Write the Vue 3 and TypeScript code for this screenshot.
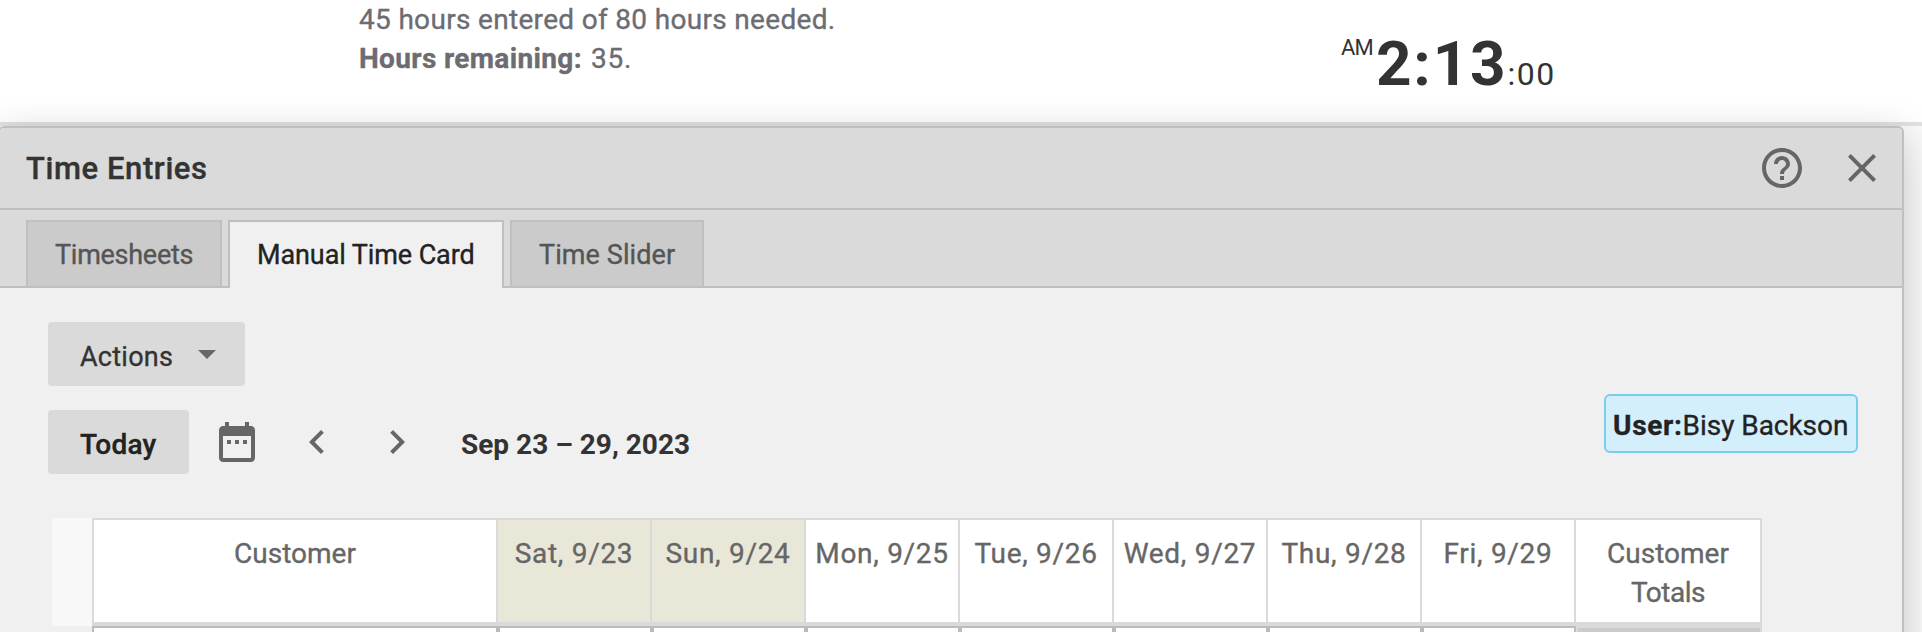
<script setup lang="ts">
interface Tab {
  id: string
  label: string
  active: boolean
}

interface DayColumn {
  label: string
  weekend: boolean
}

const tabs: Tab[] = [
  { id: 'timesheets', label: 'Timesheets', active: false },
  { id: 'manual', label: 'Manual Time Card', active: true },
  { id: 'slider', label: 'Time Slider', active: false },
]

const days: DayColumn[] = [
  { label: 'Sat, 9/23', weekend: true },
  { label: 'Sun, 9/24', weekend: true },
  { label: 'Mon, 9/25', weekend: false },
  { label: 'Tue, 9/26', weekend: false },
  { label: 'Wed, 9/27', weekend: false },
  { label: 'Thu, 9/28', weekend: false },
  { label: 'Fri, 9/29', weekend: false },
]
</script>

<template>
  <div class="page">
    <header class="summary">
      <div class="hours">
        <div class="entered">45 hours entered of 80 hours needed.</div>
        <div><b class="remaining">Hours remaining:</b><span class="left">35.</span></div>
      </div>
      <div class="clock">
        <span class="meridiem">AM</span>
        <span class="time">2:13</span>
        <span class="seconds">:00</span>
      </div>
    </header>

    <section class="dialog">
      <div class="title-bar">
        <h1>Time Entries</h1>
        <div class="tools">
          <svg class="icon" viewBox="0 0 24 24">
            <path d="M11 18h2v-2h-2v2zm1-16C6.48 2 2 6.48 2 12s4.48 10 10 10 10-4.48 10-10S17.52 2 12 2zm0 18c-4.41 0-8-3.59-8-8s3.59-8 8-8 8 3.59 8 8-3.59 8-8 8zm0-14c-2.21 0-4 1.790-4 4h2c0-1.100.9-2 2-2s2 .9 2 2c0 2-3 1.750-3 5h2c0-2.250 3-2.500 3-5 0-2.210-1.790-4-4-4z" />
          </svg>
          <svg class="icon" viewBox="0 0 24 24">
            <path d="M19 6.410L17.590 5 12 10.590 6.410 5 5 6.410 10.590 12 5 17.590 6.410 19 12 13.410 17.590 19 19 17.590 13.410 12z" />
          </svg>
        </div>
      </div>

      <nav class="tabs">
        <div v-for="tab in tabs" :key="tab.id" class="tab" :class="[tab.id, { active: tab.active }]">
          {{ tab.label }}
        </div>
      </nav>

      <div class="body">
        <button class="button actions">
          <span>Actions</span>
          <svg class="caret" viewBox="0 0 18 9"><path d="M0 0h18L9 9z" /></svg>
        </button>

        <div class="toolbar">
          <button class="button today">Today</button>
          <svg class="icon calendar" viewBox="0 0 24 24">
            <path d="M9 11H7v2h2v-2zm4 0h-2v2h2v-2zm4 0h-2v2h2v-2zm2-7h-1V2h-2v2H8V2H6v2H5c-1.110 0-1.990.9-1.990 2L3 20c0 1.100.890 2 2 2h14c1.100 0 2-.9 2-2V6c0-1.100-.9-2-2-2zm0 16H5V9h14v11z" />
          </svg>
          <svg class="icon prev" viewBox="0 0 24 24">
            <path d="M15.410 7.410L14 6l-6 6 6 6 1.410-1.410L10.830 12z" />
          </svg>
          <svg class="icon next" viewBox="0 0 24 24">
            <path d="M10 6L8.590 7.410 13.170 12l-4.580 4.590L10 18l6-6z" />
          </svg>
          <span class="range">Sep 23 – 29, 2023</span>
          <div class="user"><b>User:</b><span>Bisy Backson</span></div>
        </div>

        <div class="sheet">
          <div class="gutter"></div>
          <div class="grid">
            <div class="row head">
              <div class="cell customer">Customer</div>
              <div v-for="day in days" :key="day.label" class="cell" :class="{ weekend: day.weekend }">
                {{ day.label }}
              </div>
              <div class="cell totals">Customer <span class="tight">Totals</span></div>
            </div>
            <div class="row entry">
              <div class="slot"></div>
              <div v-for="day in days" :key="day.label" class="slot"></div>
              <div class="slot sum"></div>
            </div>
          </div>
        </div>
      </div>
    </section>
  </div>
</template>

<style>
body {
  overflow: hidden;
}
</style>

<style scoped>
.page {
  box-sizing: border-box;
  width: 1922px;
  height: 632px;
  overflow: hidden;
  background: linear-gradient(#fff 122px, #dfe1e5 122px, #dfe1e5 126px, #fafafa 126px);
  color: #666;
  font: 400 28px/39px Roboto, "Liberation Sans", sans-serif;
  -webkit-text-stroke: 0.35px currentColor;
}

.summary {
  display: flex;
  height: 126px;
}

.hours {
  width: 981px;
  padding-left: 359px;
  color: #6c6c72;
}

.entered {
  letter-spacing: 0.32px;
}

.remaining {
  letter-spacing: 0.35px;
  margin-right: 9px;
}

.left {
  letter-spacing: 0.8px;
}

.clock {
  display: flex;
  align-items: baseline;
  height: 62px;
  margin-top: 33px;
  color: #333;
  -webkit-text-stroke: 0;
}

.meridiem {
  align-self: flex-start;
  width: 35px;
  margin-top: 4px;
  padding-left: 1px;
  font-size: 22px;
  line-height: 22px;
  letter-spacing: -0.8px;
}

.time {
  font-size: 62px;
  font-weight: 700;
  line-height: 62px;
  letter-spacing: 1.8px;
}

.seconds {
  font-size: 32px;
  line-height: 32px;
  letter-spacing: 1.6px;
}

.dialog {
  position: relative;
  box-sizing: border-box;
  width: 1906px;
  height: 640px;
  margin-left: -2px;
  border: 2px solid #bfbfbf;
  border-radius: 6px 6px 0 0;
  background: #f0f0f0;
  box-shadow: 0 10px 40px rgba(0, 0, 0, 0.22);
}

.title-bar {
  display: flex;
  align-items: center;
  justify-content: space-between;
  height: 80px;
  padding: 0 16px 0 26px;
  border-bottom: 2px solid #bfbfbf;
  border-radius: 4px 4px 0 0;
  background: #dadada;
}

h1 {
  margin: 0;
  color: #333;
  font-size: 31px;
  font-weight: 500;
  letter-spacing: 0.58px;
}

.tools {
  display: flex;
  gap: 32px;
}

.icon {
  flex: none;
  width: 48px;
  height: 48px;
  fill: #666;
}

.tabs {
  display: flex;
  gap: 6px;
  height: 66px;
  padding: 10px 26px 0;
  border-bottom: 2px solid #bfbfbf;
  background: #dadada;
}

.tab {
  box-sizing: border-box;
  height: 66px;
  padding-left: 27px;
  border: 2px solid #bfbfbf;
  border-bottom: 0;
  background: #cbcbcb;
  color: #555;
  font-size: 27px;
  line-height: 67px;
  white-space: nowrap;
}

.tab.active {
  height: 68px;
  background: #f0f0f0;
  color: #222;
}

.timesheets {
  width: 196px;
  letter-spacing: -0.27px;
}

.manual {
  width: 276px;
  letter-spacing: -0.1px;
}

.slider {
  width: 194px;
  letter-spacing: 0.09px;
}

.body {
  padding: 34px 0 0 48px;
}

.button {
  box-sizing: border-box;
  height: 64px;
  padding: 0 0 0 32px;
  border: 0;
  border-radius: 4px;
  background: #dadada;
  font: inherit;
  line-height: 70px;
  text-align: left;
}

.actions {
  display: flex;
  align-items: center;
  width: 197px;
  color: #333;
  font-size: 27px;
  letter-spacing: 0.26px;
}

.actions span {
  width: 118px;
  height: 64px;
}

.caret {
  width: 18px;
  height: 9px;
  fill: #666;
}

.toolbar {
  display: flex;
  align-items: center;
  height: 64px;
  margin-top: 24px;
}

.today {
  width: 141px;
  color: #222;
  font-weight: 500;
  letter-spacing: 0.2px;
}

.calendar {
  margin-left: 24px;
}

.prev {
  margin-left: 32px;
}

.next {
  margin-left: 32px;
}

.range {
  width: 1143px;
  height: 64px;
  margin-left: 40px;
  color: #333;
  font-weight: 700;
  line-height: 70px;
  -webkit-text-stroke: 0;
}

.user {
  display: flex;
  box-sizing: border-box;
  flex: none;
  width: 254px;
  height: 59px;
  margin-top: -37px;
  padding-left: 7px;
  border: 2px solid #7ccdeb;
  border-radius: 6px;
  background: #d4effc;
  color: #222;
  line-height: 59px;
  letter-spacing: -0.05px;
  white-space: nowrap;
}

.user b {
  letter-spacing: 0.7px;
}

.sheet {
  display: flex;
  margin: 44px 0 0 4px;
}

.gutter {
  width: 40px;
  height: 108px;
  background: #f8f8f8;
}

.grid {
  width: 1670px;
}

.row {
  display: grid;
  grid-template-columns: 404px repeat(7, 154px) 184px;
}

.head {
  box-sizing: border-box;
  height: 108px;
  border: 2px solid #dadada;
  border-bottom-width: 4px;
  background: #fff;
}

.cell {
  box-sizing: border-box;
  padding-top: 14px;
  border-right: 2px solid #dadada;
  letter-spacing: 0.7px;
  text-align: center;
}

.cell.customer,
.cell.totals {
  letter-spacing: 0;
}

.cell.totals {
  padding: 14px 28px 0;
  border-right: 0;
}

.tight {
  letter-spacing: -0.5px;
}

.weekend {
  background: #e9e8d8;
}

.entry {
  height: 20px;
  grid-template-columns: 406px repeat(7, 154px) 186px;
}

.slot {
  border: 2px solid #bbb;
  background: #fff;
}

.slot.sum {
  border-color: #dadada;
  background: #cbcbcb;
}
</style>
